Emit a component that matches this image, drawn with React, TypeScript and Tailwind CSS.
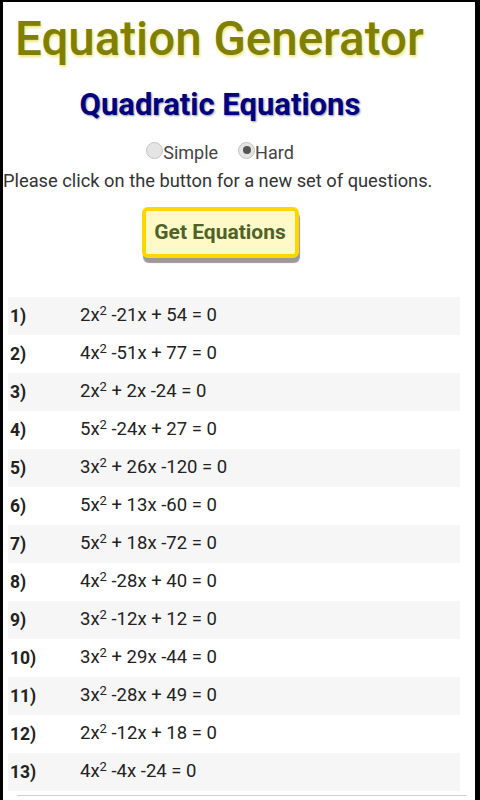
import { useState } from 'react';

const equations = [
  ['2', ' -21x + 54 = 0'],
  ['4', ' -51x + 77 = 0'],
  ['2', ' + 2x -24 = 0'],
  ['5', ' -24x + 27 = 0'],
  ['3', ' + 26x -120 = 0'],
  ['5', ' + 13x -60 = 0'],
  ['5', ' + 18x -72 = 0'],
  ['4', ' -28x + 40 = 0'],
  ['3', ' -12x + 12 = 0'],
  ['3', ' + 29x -44 = 0'],
  ['3', ' -28x + 49 = 0'],
  ['2', ' -12x + 18 = 0'],
  ['4', ' -4x -24 = 0'],
];

function Radio({ checked, label, onClick }: { checked: boolean; label: string; onClick: () => void }) {
  return (
    <label className="flex items-center cursor-pointer" onClick={onClick}>
      <span className="w-[17px] h-[17px] rounded-full border border-[#c4c4c4] bg-[#e4e4e4] flex items-center justify-center mt-[-6px]">
        {checked && <span className="w-[8px] h-[8px] rounded-full bg-[#555]" />}
      </span>
      <span>{label}</span>
    </label>
  );
}

export default function App() {
  const [mode, setMode] = useState<'simple' | 'hard'>('hard');

  return (
    <div className="w-[480px] h-[800px] bg-black pt-[2px] pl-[3px] pr-[5px] overflow-hidden" style={{ fontFamily: 'Roboto, "Liberation Sans", sans-serif' }}>
      <div className="bg-white h-full overflow-hidden">
        <h1 className="ml-[12px] mt-[11px] text-[47.5px] leading-[52px] font-medium text-[#808000] whitespace-nowrap [text-shadow:1px_2px_3px_#ece47a]">
          Equation Generator
        </h1>

        <div className="w-[434px] flex flex-col items-center text-[#333]">
          <h2 className="mt-[22px] text-[31px] leading-[36px] font-bold text-[#000080] [text-shadow:1px_1px_2px_#9090a0]">
            Quadratic Equations
          </h2>

          <div className="mt-[18px] flex gap-[20px] text-[18px] leading-[24px] text-[#444]">
            <Radio checked={mode === 'simple'} label="Simple" onClick={() => setMode('simple')} />
            <Radio checked={mode === 'hard'} label="Hard" onClick={() => setMode('hard')} />
          </div>

          <p className="mt-[4px] self-start whitespace-nowrap text-[18.3px] leading-[24px] text-[#333]">
            Please click on the button for a new set of questions.
          </p>

          <button className="mt-[14px] w-[157px] h-[51px] rounded-[6px] border-[4px] border-[#ffd600] bg-[#fff9c8] text-[21px] font-bold text-[#4f6228] shadow-[1px_5px_1px_#999]">
            Get Equations
          </button>
        </div>

        <table className="mt-[39px] ml-[5px] w-[452px] text-[18.5px] text-[#222] border-collapse">
          <tbody>
            {equations.map(([a, rest], i) => (
              <tr key={i} className={i % 2 === 0 ? 'bg-[#f6f6f6]' : 'bg-white'}>
                <td className="h-[38px] w-[72px] pl-[2px] font-bold text-[17.5px]">{i + 1})</td>
                <td className="h-[38px]">
                  {a}x<sup className="text-[13px]">2</sup>{rest}
                </td>
              </tr>
            ))}
          </tbody>
        </table>
        <div className="mt-[4px] ml-[14px] w-[450px] h-[1px] bg-[#d0d0d0]" />
      </div>
    </div>
  );
}
